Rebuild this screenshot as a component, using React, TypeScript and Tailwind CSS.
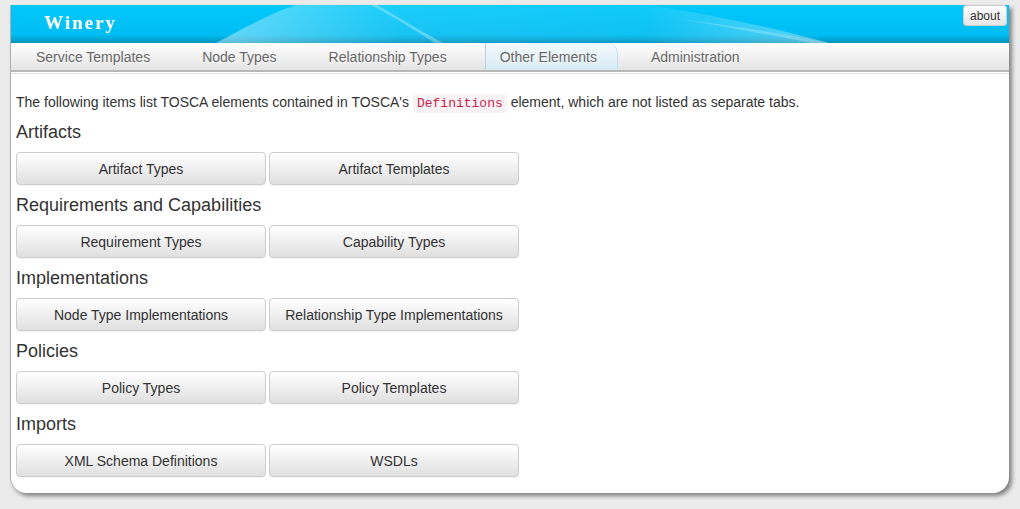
import React from "react";

const font = { fontFamily: '"Liberation Sans", Arial, Helvetica, sans-serif' };

function Btn({ label }: { label: string }) {
  return (
    <div className="w-[250px] h-[33px] pt-[1px] flex items-center justify-center rounded-[4px] border border-[#cccccc] bg-gradient-to-b from-white to-[#e0e0e0] text-[14px] text-[#333333] shadow-[0_1px_1px_rgba(0,0,0,0.05)]">
      {label}
    </div>
  );
}

function Section({ title, items }: { title: string; items: [string, string] }) {
  return (
    <div className="mt-[10px]">
      <h2 className="text-[18px] leading-[20px] text-[#333333]">{title}</h2>
      <div className="mt-[10px] flex gap-[3px]">
        <Btn label={items[0]} />
        <Btn label={items[1]} />
      </div>
    </div>
  );
}

function HeaderArt() {
  return (
    <svg className="absolute inset-0" width="999" height="38" viewBox="0 0 999 38" preserveAspectRatio="none">
      <defs>
        <linearGradient id="hb" x1="0" y1="0" x2="0" y2="1">
          <stop offset="0" stopColor="#00c8fb" />
          <stop offset="0.78" stopColor="#00bdf2" />
          <stop offset="0.9" stopColor="#00a8d8" />
          <stop offset="1" stopColor="#0092bd" />
        </linearGradient>
        <linearGradient id="sw" x1="0" y1="0" x2="1" y2="0">
          <stop offset="0" stopColor="#ffffff" stopOpacity="0.4" />
          <stop offset="0.3" stopColor="#ffffff" stopOpacity="0.1" />
          <stop offset="0.7" stopColor="#ffffff" stopOpacity="0.06" />
          <stop offset="1" stopColor="#ffffff" stopOpacity="0.35" />
        </linearGradient>
      </defs>
      <rect width="999" height="38" fill="url(#hb)" />
      <path d="M205 38 C 235 22, 260 8, 285 0 L 640 0 C 700 10, 760 22, 818 38 Z" fill="url(#sw)" />
      <path d="M360 0 L 366 0 C 390 14, 410 26, 432 38 L 424 38 C 405 26, 385 13, 360 0 Z" fill="#ffffff" opacity="0.3" />
      <path d="M670 14 C 730 22, 780 30, 818 38 L 800 38 C 760 30, 715 22, 670 14 Z" fill="#ffffff" opacity="0.22" />
    </svg>
  );
}

export default function App() {
  const navItems = ["Service Templates", "Node Types", "Relationship Types", "Other Elements", "Administration"];
  return (
    <div className="w-[1020px] h-[509px] bg-[#ebebeb] pt-[5px]" style={font}>
      <div className="ml-[10px] w-[999px] h-[488px] bg-white border-l border-[#b0b0b0] rounded-b-[16px] shadow-[3px_3px_4px_rgba(0,0,0,0.45)] overflow-hidden">
        {/* Header */}
        <div className="relative h-[38px]">
          <HeaderArt />
          <div
            className="absolute left-[33px] top-[4px] text-white text-[19px] font-bold tracking-[2px]"
            style={{ fontFamily: '"Liberation Serif", "DejaVu Serif", serif' }}
          >
            Winery
          </div>
          <div className="absolute right-[2px] top-[0px] h-[21px] px-[6px] flex items-center rounded-[3px] border border-[#cccccc] bg-gradient-to-b from-white to-[#e6e6e6] text-[12px] text-[#333333]">
            about
          </div>
        </div>
        {/* Nav */}
        <div className="h-[29px] bg-gradient-to-b from-white to-[#e4e4e4] border-b-2 border-[#b8b8b8] flex items-stretch pl-[11px]">
          {navItems.map((n, i) => {
            const active = n === "Other Elements";
            const margin = i === 0 ? "mr-[12px]" : "mx-[12px]";
            return (
              <div
                key={n}
                className={
                  active
                    ? "ml-[12px] mr-[7px] pl-[14px] pr-[20px] pt-[2px] flex items-center text-[14px] text-[#666666] border-l border-[#c0d0d8] border-r border-r-[#bfe0ef] rounded-tr-[10px] bg-gradient-to-b from-[#f4fafd] to-[#d8ebf5]"
                    : `${margin} px-[14px] pt-[2px] flex items-center text-[14px] text-[#666666]`
                }
                style={{ textShadow: "0 1px 0 #ffffff" }}
              >
                {n}
              </div>
            );
          })}
        </div>
        <div className="h-[1px] bg-[#e2e2e2] mt-[1px]" />
        {/* Content */}
        <div className="pl-[5px] pt-[18px]">
          <p className="text-[14px] leading-[20px] text-[#333333]">
            The following items list TOSCA elements contained in TOSCA's{" "}
            <code
              className="text-[13px] text-[#c7254e] bg-[#f9f2f4] rounded-[4px] px-[4px] py-[2px]"
              style={{ fontFamily: '"Liberation Mono", "DejaVu Sans Mono", monospace' }}
            >
              Definitions
            </code>{" "}
            element, which are not listed as separate tabs.
          </p>
          <div className="-mt-[2px]">
            <Section title="Artifacts" items={["Artifact Types", "Artifact Templates"]} />
          </div>
          <Section title="Requirements and Capabilities" items={["Requirement Types", "Capability Types"]} />
          <Section title="Implementations" items={["Node Type Implementations", "Relationship Type Implementations"]} />
          <Section title="Policies" items={["Policy Types", "Policy Templates"]} />
          <Section title="Imports" items={["XML Schema Definitions", "WSDLs"]} />
        </div>
      </div>
    </div>
  );
}
